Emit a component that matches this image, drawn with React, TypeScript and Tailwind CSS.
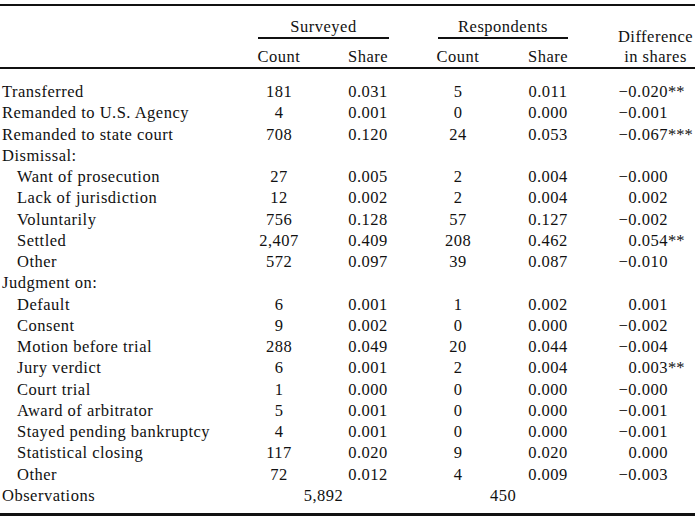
import React from "react";

type Row = {
  label: string;
  indent?: boolean;
  sc?: string;
  ss?: string;
  rc?: string;
  rs?: string;
  diff?: string;
  stars?: string;
};

const rows: Row[] = [
  { label: "Transferred", sc: "181", ss: "0.031", rc: "5", rs: "0.011", diff: "−0.020", stars: "**" },
  { label: "Remanded to U.S. Agency", sc: "4", ss: "0.001", rc: "0", rs: "0.000", diff: "−0.001" },
  { label: "Remanded to state court", sc: "708", ss: "0.120", rc: "24", rs: "0.053", diff: "−0.067", stars: "***" },
  { label: "Dismissal:" },
  { label: "Want of prosecution", indent: true, sc: "27", ss: "0.005", rc: "2", rs: "0.004", diff: "−0.000" },
  { label: "Lack of jurisdiction", indent: true, sc: "12", ss: "0.002", rc: "2", rs: "0.004", diff: "0.002" },
  { label: "Voluntarily", indent: true, sc: "756", ss: "0.128", rc: "57", rs: "0.127", diff: "−0.002" },
  { label: "Settled", indent: true, sc: "2,407", ss: "0.409", rc: "208", rs: "0.462", diff: "0.054", stars: "**" },
  { label: "Other", indent: true, sc: "572", ss: "0.097", rc: "39", rs: "0.087", diff: "−0.010" },
  { label: "Judgment on:" },
  { label: "Default", indent: true, sc: "6", ss: "0.001", rc: "1", rs: "0.002", diff: "0.001" },
  { label: "Consent", indent: true, sc: "9", ss: "0.002", rc: "0", rs: "0.000", diff: "−0.002" },
  { label: "Motion before trial", indent: true, sc: "288", ss: "0.049", rc: "20", rs: "0.044", diff: "−0.004" },
  { label: "Jury verdict", indent: true, sc: "6", ss: "0.001", rc: "2", rs: "0.004", diff: "0.003", stars: "**" },
  { label: "Court trial", indent: true, sc: "1", ss: "0.000", rc: "0", rs: "0.000", diff: "−0.000" },
  { label: "Award of arbitrator", indent: true, sc: "5", ss: "0.001", rc: "0", rs: "0.000", diff: "−0.001" },
  { label: "Stayed pending bankruptcy", indent: true, sc: "4", ss: "0.001", rc: "0", rs: "0.000", diff: "−0.001" },
  { label: "Statistical closing", indent: true, sc: "117", ss: "0.020", rc: "9", rs: "0.020", diff: "0.000" },
  { label: "Other", indent: true, sc: "72", ss: "0.012", rc: "4", rs: "0.009", diff: "−0.003" },
];

export default function App() {
  return (
    <div
      className="w-[695px] h-[516px] bg-white text-[#111] text-[16.5px] tracking-[0.5px] pt-[4px]"
      style={{ fontFamily: '"Liberation Serif", "Times New Roman", serif' }}
    >
      <div className="border-t-2 border-[#111]" />

      {/* header */}
      <div className="grid grid-cols-[240px_78px_100px_80px_100px_97px] leading-[20px] border-b-2 border-[#111]">
        <div />
        <div className="col-span-2 ml-[18px] mr-[29px] pt-[11px] text-center border-b-2 border-[#111]">Surveyed</div>
        <div className="col-span-2 ml-[20px] mr-[30px] pt-[11px] text-center border-b-2 border-[#111]">Respondents</div>
        <div className="row-span-2 flex flex-col justify-end pl-[18px] text-center">
          <span>Difference</span>
          <span>in shares</span>
        </div>
        <div />
        <div className="pt-[8px] text-center">Count</div>
        <div className="pt-[8px] text-center">Share</div>
        <div className="pt-[8px] text-center">Count</div>
        <div className="pt-[8px] text-center">Share</div>
      </div>

      {/* body */}
      <div className="grid grid-cols-[240px_78px_100px_80px_100px_70px_27px] leading-[21.25px] pt-[12px] pb-[7px] border-b-[3px] border-[#111]">
        {rows.map((r, i) => (
          <React.Fragment key={i}>
            <div className={r.indent ? "pl-[17px]" : "pl-[2px]"}>{r.label}</div>
            <div className="text-center">{r.sc}</div>
            <div className="text-center">{r.ss}</div>
            <div className="text-center">{r.rc}</div>
            <div className="text-center">{r.rs}</div>
            <div className="text-right">{r.diff}</div>
            <div className="text-left tracking-normal">{r.stars}</div>
          </React.Fragment>
        ))}
        <div className="pl-[2px]">Observations</div>
        <div className="col-span-2 ml-[18px] mr-[29px] text-center">5,892</div>
        <div className="col-span-2 ml-[20px] mr-[30px] text-center">450</div>
        <div className="col-span-2" />
      </div>
    </div>
  );
}
